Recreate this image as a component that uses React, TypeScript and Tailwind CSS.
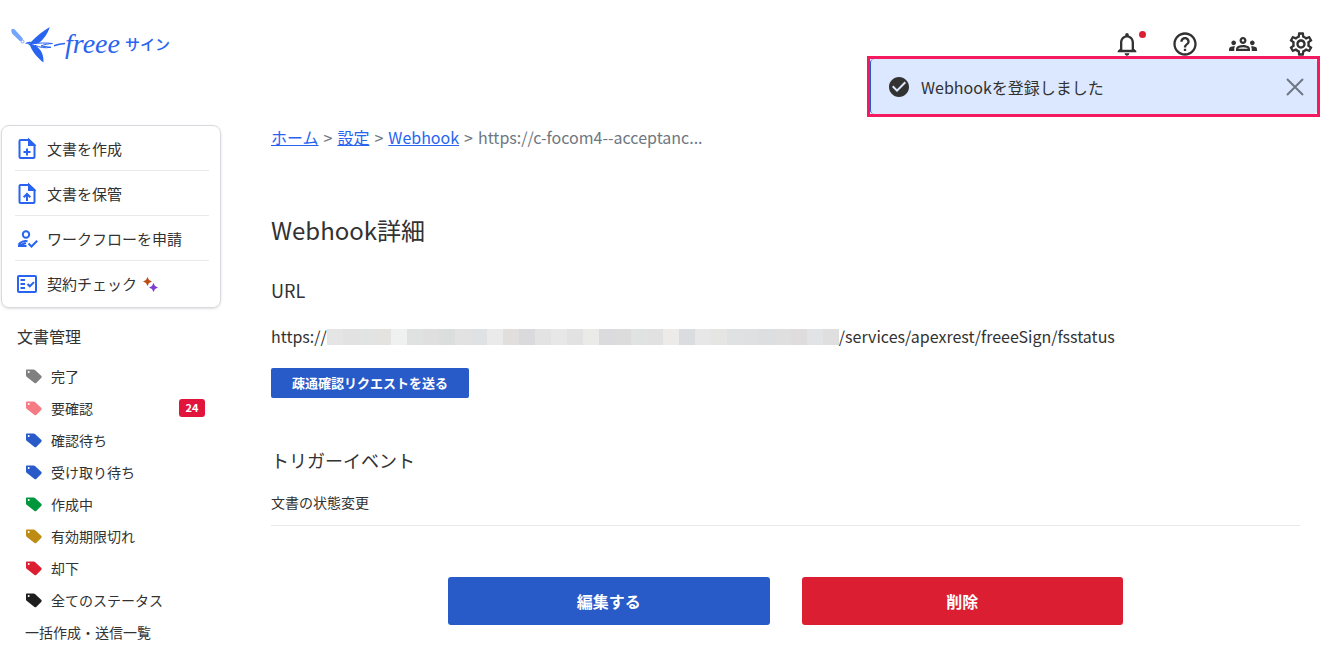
import type { ReactNode } from "react";
import {
  MdCheckCircle,
  MdHelpOutline,
  MdNotificationsNone,
  MdOutlineGroups,
  MdOutlineSettings,
} from "react-icons/md";

const ACTIONS = [
  { label: "文書を作成", icon: <FileIcon mark="M12 11.500v7M8.500 15h7" /> },
  { label: "文書を保管", icon: <FileIcon mark="M12 19v-6M8.700 15.300L12 12l3.300 3.300" /> },
  { label: "ワークフローを申請", icon: <ApproverIcon /> },
  { label: "契約チェック", icon: <ChecklistIcon />, sparkle: true },
];

const STATUSES = [
  { label: "完了", color: "text-[#808080]" },
  { label: "要確認", color: "text-[#f57a84]", count: 24 },
  { label: "確認待ち", color: "text-[#285ac8]" },
  { label: "受け取り待ち", color: "text-[#285ac8]" },
  { label: "作成中", color: "text-[#00963c]" },
  { label: "有効期限切れ", color: "text-[#be8c14]" },
  { label: "却下", color: "text-[#dc1e32]" },
  { label: "全てのステータス", color: "text-[#1e1e1e]" },
];

const MASK_CELLS = [
  "bg-[#e5e5e5]", "bg-[#e2e2e2]", "bg-[#e2e4e3]", "bg-[#e5e3e2]",
  "bg-[#eff1f0]", "bg-[#e0e1e1]", "bg-[#dfdfdf]", "bg-[#dcdddd]",
  "bg-[#e2e2e2]", "bg-[#e0e1e2]", "bg-[#eaeaea]", "bg-[#e0dfde]",
  "bg-[#dadadc]", "bg-[#e3e3e3]", "bg-[#e7e7e7]", "bg-[#e2e2e2]",
  "bg-[#eaeae8]", "bg-[#dbdbdd]", "bg-[#dcdcdc]", "bg-[#e1e2e2]",
  "bg-[#e1e1e1]", "bg-[#edebe9]", "bg-[#dadcdf]", "bg-[#e7e7e7]",
  "bg-[#e5e5e3]", "bg-[#dfe1e3]", "bg-[#dfe0e1]", "bg-[#dddee0]",
  "bg-[#dfdfe0]", "bg-[#dfdcde]", "bg-[#e1e3e5]", "bg-[#dfdfdf]",
];

function Logo() {
  return (
    <a href="#" aria-label="freee サイン" className="flex items-center text-[#2864f0]">
      <svg width="54" height="40" viewBox="11 24 54 40" fill="none">
        <path d="M11.300 31C10.800 29.300 12.800 27.800 14.500 29.300l8 8.700c1 1.800-1.200 3.800-3 2.700L12 33.500z" fill="#73a5ff" />
        <circle cx="22.500" cy="41.500" r="1.500" stroke="#73a5ff" />
        <path d="M25 43.800c1.500-1.800 4-2.600 6-1.800C36.500 36 43 31 49.800 27 47.500 34 44 39 38.500 43.300c-3 .8-6 1-8.500.5z" fill="currentColor" />
        <path d="M28 44c2-.5 4 .3 6 .8 4.500 2.500 10 7 9.500 17.700C37.500 58 32.500 52 30 45.500z" fill="currentColor" />
        <path d="M33 43.700c6-.7 13-1 19.500-.2-4.500.2-8 .9-11.500 2.500l10 1.300c-6 1-11 .3-16-2" fill="#fff" stroke="currentColor" />
        <path d="M54 45.700c3.500-1.200 7-1.900 11-2.200" stroke="currentColor" strokeWidth="1.600" />
      </svg>
      <span className="font-['Liberation_Serif',serif] text-[28px] leading-10 italic">freee</span>
      <span className="ml-[5px] text-[15px] font-medium">サイン</span>
    </a>
  );
}

function FileIcon({ mark }: { mark: string }) {
  return (
    <svg width="24" height="24" viewBox="0 0 24 24" fill="none" stroke="currentColor" strokeWidth="2">
      <path d="M14 3H5.500a1 1 0 0 0-1 1v16a1 1 0 0 0 1 1h13a1 1 0 0 0 1-1V8z" />
      <path d="M14 3v5h5z" fill="currentColor" />
      <path d={mark} />
    </svg>
  );
}

function ApproverIcon() {
  return (
    <svg width="24" height="24" viewBox="0 0 24 24" fill="none" stroke="currentColor" strokeWidth="2">
      <circle cx="11" cy="7.500" r="3.200" />
      <path d="M12.500 14.200c-3-.6-7.500.5-9 3.500M3 19h8.500M4 18.500l7-2.500" />
      <path d="M13.500 16.500l3 3 5.700-5.700" />
    </svg>
  );
}

function ChecklistIcon() {
  return (
    <svg width="24" height="24" viewBox="0 0 24 24" fill="none" stroke="currentColor" strokeWidth="2">
      <rect x="3" y="4" width="18" height="16" rx="1" />
      <path d="M5.500 8H10M5.500 12H10M5.500 16H10" />
      <path d="M12.500 12l2.300 2.300 4.200-4.200" />
    </svg>
  );
}

function CloseIcon() {
  return (
    <svg width="28" height="28" viewBox="0 0 28 28" fill="none" stroke="currentColor" strokeWidth="2">
      <path d="M6 6l16 16M22 6L6 22" />
    </svg>
  );
}

function TagIcon({ className }: { className: string }) {
  return (
    <svg width="16" height="16" viewBox="0 0 16 16" className={className}>
      <path
        fill="currentColor"
        fillRule="evenodd"
        d="M.7 1.500h7c.5 0 .9.200 1.300.6l6.400 6c.4.500.4 1.100 0 1.600l-5.200 5.200c-.5.500-1.200.5-1.700 0L.6 8.700C.2 8.300 0 7.900 0 7.400V2.200c0-.4.300-.7.700-.7zm2 1.500a1 1 0 1 0 0 2 1 1 0 0 0 0-2z"
      />
    </svg>
  );
}

function Sparkle() {
  return (
    <svg width="15" height="15" viewBox="0 0 15 15">
      <path d="M4.500 0l1.500 3L9 4.500 6 6 4.500 9 3 6 0 4.500 3 3z" fill="#be4b14" />
      <path d="M10.500 6l1.500 3 3 1.500-3 1.500-1.500 3L9 12l-3-1.500L9 9z" fill="#7d3cd2" />
    </svg>
  );
}

function IconButton({ label, children }: { label: string; children: ReactNode }) {
  return (
    <button aria-label={label} className="relative flex w-7 justify-center">
      {children}
    </button>
  );
}

function Header() {
  return (
    <header className="flex h-22 items-center justify-between px-[11px]">
      <Logo />
      <div className="flex items-center gap-[30px]">
        <IconButton label="お知らせ">
          <MdNotificationsNone size={28} />
          <span className="absolute top-px right-[-5px] size-[7px] rounded-full bg-[#dc1e32]" />
        </IconButton>
        <IconButton label="ヘルプ">
          <MdHelpOutline size={28} />
        </IconButton>
        <IconButton label="メンバー">
          <MdOutlineGroups size={28} />
        </IconButton>
        <IconButton label="設定">
          <MdOutlineSettings size={28} />
        </IconButton>
      </div>
    </header>
  );
}

function Toast() {
  return (
    <div
      role="status"
      className="absolute top-[56px] right-[6px] h-[61px] w-[453px] border-3 border-[#f5195f] bg-white"
    >
      <div className="flex h-full items-center rounded-sm border-l border-[#285ac8] bg-[#dce8ff] pr-2 pl-4">
        <MdCheckCircle size={24} />
        <p className="ml-2.5 flex-1">Webhookを登録しました</p>
        <button aria-label="閉じる" className="text-[#6e7782]">
          <CloseIcon />
        </button>
      </div>
    </div>
  );
}

function Sidebar() {
  return (
    <aside className="w-[221px] shrink-0 pl-px">
      <ul className="rounded-lg border border-[#d7dbdf] pr-[11px] pb-0.5 pl-[13px] shadow-sm">
        {ACTIONS.map(({ label, icon, sparkle }) => (
          <li key={label} className="border-b border-[#e9e9eb] last:border-b-0">
            <a href="#" className="flex h-11 items-center pt-0.5 text-[15px]">
              <span className="text-[#2864f0]">{icon}</span>
              <span className="mr-1.5 ml-2">{label}</span>
              {sparkle && <Sparkle />}
            </a>
          </li>
        ))}
      </ul>
      <h2 className="mt-3.5 pl-4 leading-7">文書管理</h2>
      <ul className="mt-2.5 pr-4 pl-6 text-sm">
        {STATUSES.map(({ label, color, count }) => (
          <li key={label}>
            <a href="#" className="flex h-8 items-center">
              <TagIcon className={`ml-px ${color}`} />
              <span className="ml-[9px] flex-1">{label}</span>
              {count && (
                <span className="flex h-[18px] w-[26px] items-center justify-center rounded-[3px] bg-[#e1143c] text-[11px] font-bold text-white">
                  {count}
                </span>
              )}
            </a>
          </li>
        ))}
        <li>
          <a href="#" className="flex h-8 items-center">
            一括作成・送信一覧
          </a>
        </li>
      </ul>
    </aside>
  );
}

function Breadcrumb() {
  return (
    <nav className="flex gap-[5px] leading-6 text-[#6e7782]">
      {["ホーム", "設定", "Webhook"].map((label) => (
        <span key={label} className="flex gap-[5px]">
          <a href="#" className="text-[#2864f0] underline">
            {label}
          </a>
          <span>&gt;</span>
        </span>
      ))}
      <span>https://c-focom4--acceptanc...</span>
    </nav>
  );
}

export default function App() {
  return (
    <div className="relative bg-white font-['Noto_Sans_CJK_JP',sans-serif] text-[#323232]">
      <Header />
      <Toast />
      <div className="flex pt-[37px]">
        <Sidebar />
        <main className="min-w-0 flex-1 pr-[26px] pl-[50px]">
          <Breadcrumb />
          <h1 className="mt-[63px] text-2xl leading-9">Webhook詳細</h1>
          <h2 className="mt-7 text-lg leading-7">URL</h2>
          <p className="mt-5 flex h-6 items-center leading-6">
            https://
            <span className="mt-0.5 flex h-4" aria-hidden="true">
              {MASK_CELLS.map((cell, i) => (
                <span key={i} className={`w-4 ${cell}`} />
              ))}
            </span>
            /services/apexrest/freeeSign/fsstatus
          </p>
          <button className="mt-5 h-[30px] rounded-xs bg-[#285ac8] px-[21px] text-[13px] font-bold text-white">
            疎通確認リクエストを送る
          </button>
          <h2 className="mt-12 text-lg leading-7">トリガーイベント</h2>
          <p className="mt-[18px] border-b border-[#e9e9eb] pb-[13px] text-sm leading-5">文書の状態変更</p>
          <div className="mx-auto mt-[51px] grid max-w-[675px] grid-cols-2 gap-8 font-bold text-white">
            <button className="h-12 rounded-[3px] bg-[#285ac8]">編集する</button>
            <button className="h-12 rounded-[3px] bg-[#dc1e32]">削除</button>
          </div>
        </main>
      </div>
    </div>
  );
}
